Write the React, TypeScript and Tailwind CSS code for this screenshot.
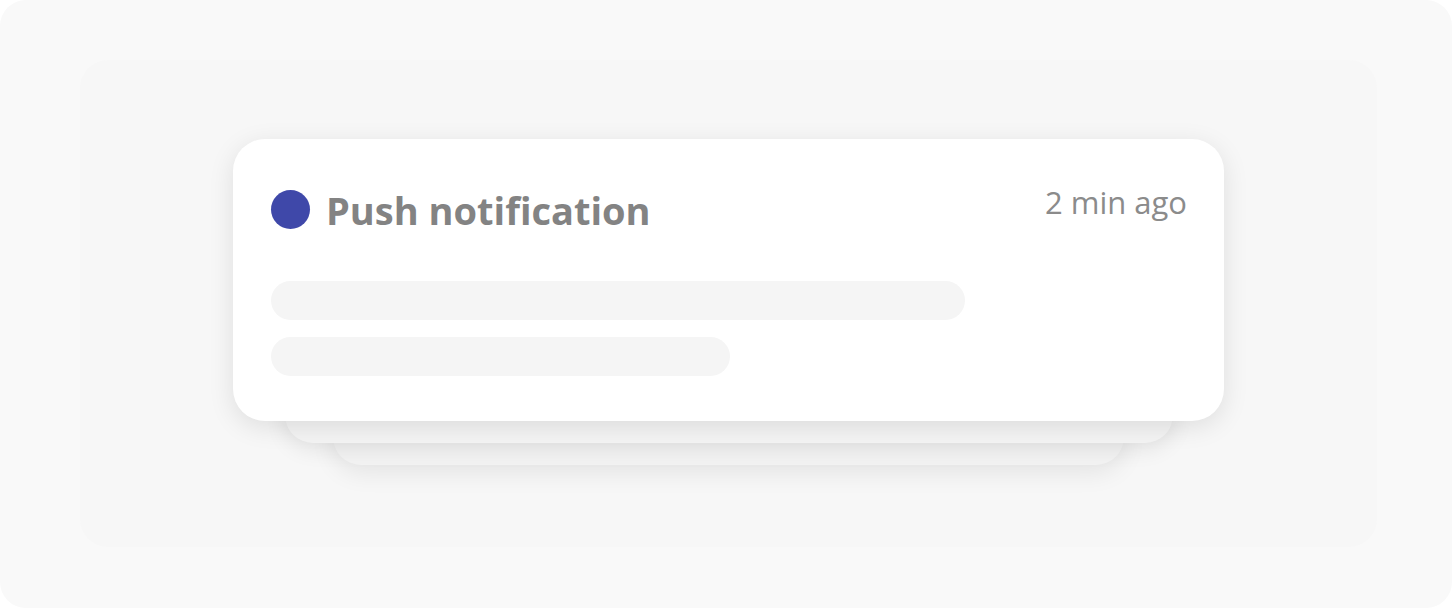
import React from "react";

export default function App() {
  return (
    <div className="w-full h-[608px] bg-white" style={{ fontFamily: '"Open Sans", "Liberation Sans", sans-serif' }}>
      {/* Outer frame */}
      <div className="h-full rounded-[26px] bg-[#f9f9f9] pl-[80px] pr-[75px] pt-[60px] pb-[61px]">
        {/* Inner panel */}
        <div className="h-full rounded-[28px] bg-[#f7f7f7] pb-[4px] flex flex-col items-center justify-center">
          {/* Front card */}
          <div className="relative z-[3] w-[991px] bg-white rounded-[32px] shadow-[0_6px_26px_rgba(0,0,0,0.10)] pl-[38px] pr-[37px] pt-[47px] pb-[45px]">
            <div className="flex items-start justify-between h-[48px]">
              <div className="flex items-center h-[48px]">
                <span className="w-[39px] h-[39px] rounded-full bg-[#3f48a9]" />
                <span className="ml-[16px] text-[38px] leading-[48px] font-bold text-[#838383]">
                  Push notification
                </span>
              </div>
              <span className="-mt-[4px] text-[31px] leading-[40px] text-[#8b8b8b]">2 min ago</span>
            </div>
            <div className="mt-[47px] flex flex-col gap-[17px]">
              <div className="w-[694px] h-[39px] rounded-full bg-[#f5f5f5]" />
              <div className="w-[459px] h-[39px] rounded-full bg-[#f5f5f5]" />
            </div>
          </div>
          {/* Stacked cards behind */}
          <div className="relative z-[2] -mt-[38px] w-[888px] h-[60px] rounded-[28px] bg-[#f4f4f4] shadow-[0_6px_22px_rgba(0,0,0,0.09)]" />
          <div className="relative z-[1] -mt-[38px] w-[791px] h-[60px] rounded-[28px] bg-[#f3f3f3] shadow-[0_8px_24px_rgba(0,0,0,0.08)]" />
        </div>
      </div>
    </div>
  );
}
